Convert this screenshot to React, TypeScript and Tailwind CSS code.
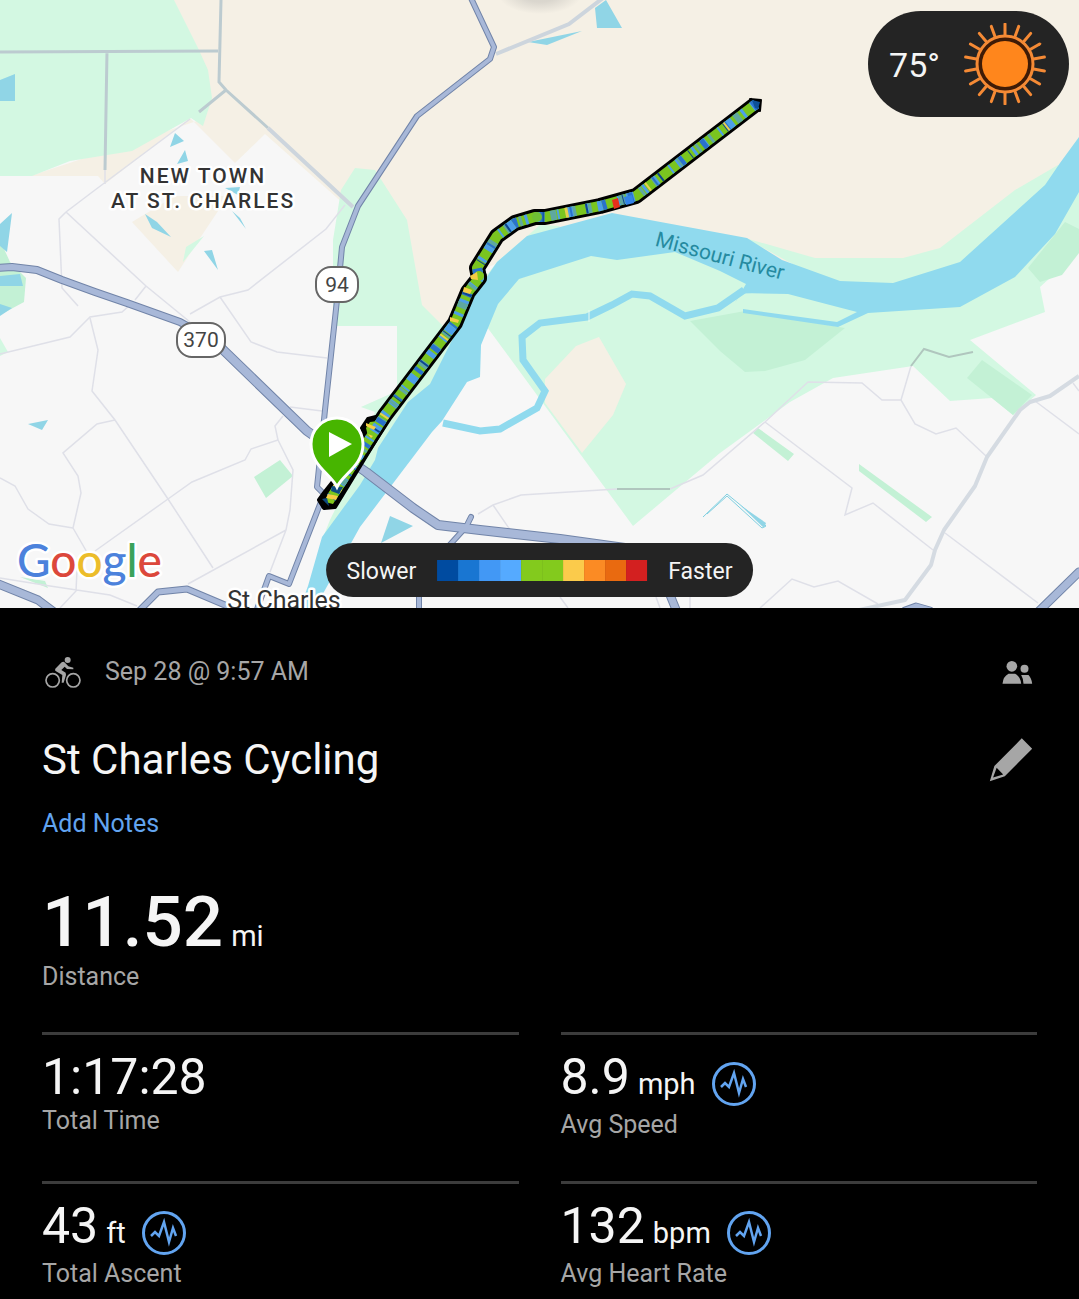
import React from "react";

interface Stat {
  label: string;
  value: string;
  unit?: string;
  hasChart?: boolean;
}

const stats: Stat[] = [
  { label: "Total Time", value: "1:17:28" },
  { label: "Avg Speed", value: "8.9", unit: "mph", hasChart: true },
  { label: "Total Ascent", value: "43", unit: "ft", hasChart: true },
  { label: "Avg Heart Rate", value: "132", unit: "bpm", hasChart: true },
];

const speedColors = [
  "bg-[#004ba0]",
  "bg-[#1976d2]",
  "bg-[#4298f5]",
  "bg-[#55aaff]",
  "bg-[#83ca1d]",
  "bg-[#83ca1d]",
  "bg-[#fbcb4b]",
  "bg-[#fb8b24]",
  "bg-[#e96a10]",
  "bg-[#d32020]",
];

const highways = [
  { d: "M470 -4 L494 47 L490 59 L417 116 L358 206 L342 247 L337 300 L325 410 L317 487 L324 494 L289 584 L269 576 L256 612", w: 4 },
  { d: "M-4 268 L12 267 L37 270 L62 280 L95 292 L127 303 L180 322 L214 341", w: 6 },
  { d: "M214 341 L307 431 L366 472 L413 508 L438 525 L480 530 L560 539 L740 564", w: 8 },
  { d: "M-4 583 L38 600 L54 612", w: 7 },
  { d: "M140 610 L158 592 L187 589 L232 608", w: 5 },
  { d: "M471 517 L466 527 L446 549", w: 4 },
  { d: "M419 590 L419 612", w: 4 },
  { d: "M668 590 L677 612", w: 7 },
  { d: "M1038 612 L1079 572", w: 7 },
  { d: "M905 610 L916 606 L930 610", w: 5 },
];

const localRoads = [
  "M105 170 L105 184 M190 119 L95 190 L66 212 L59 219 L62 288 L78 306 M90 318 L98 350 L92 391 L115 420 L168 499 L213 568",
  "M66 212 L146 286 L190 322 M146 286 L135 300",
  "M345 205 L326 229 L248 290 L220 297 L190 314 M220 297 L251 342 L277 352 L327 358",
  "M0 354 L70 337 L90 317 L122 312 L130 305",
  "M115 420 L97 424 L63 453 L78 476 L81 493 L73 528 L88 554",
  "M0 478 L15 486 L28 509 L49 524 L73 528",
  "M95 551 L168 499 L192 482 L245 460 L251 449 L278 440 L275 426 L283 416",
  "M278 440 L293 470 L290 510 L286 530 L270 572 M286 530 L188 584",
  "M290 407 L322 411",
  "M0 578 L50 586 L110 595 L137 606 M77 570 L76 591 L60 608",
  "M478 514 L493 505 L521 495 L617 489 M670 489 L703 475 L765 422 L808 382 L862 383 L882 400 L901 400 L915 424 L936 434 L956 428 L986 456",
  "M901 400 L911 366 M765 422 L852 488 L845 515 L873 503 L933 550",
  "M493 505 L515 537 M945 533 L1038 603 M1035 401 L1079 434 M1073 383 L1079 391",
  "M760 608 L792 579 L814 587 L838 581 L878 604",
  "M560 597 L568 608 M656 597 L660 608 M690 597 L690 608",
];

const route =
  "M756 104 L636 196 L600 206 L545 217 L535 217 L515 223 L497 236 L477 268 L479 278 L468 292 L455 323 L385 415 L331 498";

const rayAngles = Array.from({ length: 18 }, (_, i) => i * 20);

const RideMap: React.FC = () => (
  <svg
    viewBox="0 0 1079 608"
    className="block w-full h-auto font-[Roboto,sans-serif]"
    role="img"
    aria-label="Ride map"
  >
    <defs>
      <radialGradient id="knob">
        <stop offset="0.4" stopColor="#888" stopOpacity="0.25" />
        <stop offset="1" stopColor="#888" stopOpacity="0" />
      </radialGradient>
    </defs>
    <rect width="1079" height="608" fill="#f7f7f7" />

    {/* LAND */}
    <path d="M170 0 H1079 V170 L940 262 H760 L612 214 L470 275 L445 325 L420 325 L370 200 L345 205 L265 134 L235 163 L190 118 L105 184 L98 176 H30 L200 120Z" fill="#f5f0e5" />
    <path d="M0 0 H174 L198 48 L208 70 L212 98 L203 126 L191 118 L132 151 L70 161 L32 176 H0Z" fill="#d3f8e2" />
    <path d="M132 222 L175 196 L228 196 L200 238 L178 272Z" fill="#f5f0e5" />
    <path d="M204 236 L186 247 L183 262Z" fill="#d3f8e2" />
    <path d="M355 168 L375 170 L407 220 L422 305 L445 328 L497 262 L540 225 L560 226 L440 390 L320 545 L330 520 L352 475 L375 412 L361 407 L397 391 V326 H333 V240 L341 190Z" fill="#d3f8e2" />
    <path d="M0 240 L10 262 L26 278 L24 302 L0 315Z" fill="#c3f1d5" />
    <path d="M0 338 L8 352 L0 356Z" fill="#d3f8e2" />
    <path d="M745 238 L815 258 H903 L940 248 L1015 190 L1058 165 V200 L960 290 H840Z" fill="#d3f8e2" />
    <path d="M487 327 L498 304 L519 279 L591 250 L680 245 L788 290 L870 300 L1015 270 L1079 190 V252 L1040 287 L1045 312 L970 340 L1036 395 L1013 415 L992 398 L950 401 L913 366 L833 378 L790 402 L720 453 L633 526Z" fill="#d3f8e2" />
    <path d="M1065 222 L1079 229 V253 L1062 275 L1040 282 L1028 268Z" fill="#c3f1d5" />
    <path d="M690 321 L745 311 L845 328 L805 360 L765 371 L745 372 L720 351Z" fill="#c3f1d5" />
    <path d="M982 360 L1032 395 L1013 415 L967 378Z" fill="#c3f1d5" />
    <path d="M599 337 L576 346 L545 379 L545 403 L582 453 L613 415 L626 384Z" fill="#f5f0e5" />
    <path d="M280 460 L293 476 L266 498 L254 477Z M758 428 L794 454 L788 461 L753 433Z M859 464 L932 517 L926 522 L859 471Z M20 577 L45 581 L48 588Z" fill="#c3f1d5" />

    {/* WATER */}
    <path d="M300 608 L308 586 L322 537 L360 485 L375 460 L378 448 L408 402 L430 384 L447 350 L478 290 L497 262 L527 236 L612 213 L720 233 L747 238 L782 260 L840 281 L893 283 L960 262 L1045 185 L1060 163 L1079 137 V192 L1055 234 L1015 277 L960 307 L868 313 L838 327 L743 313 V309 L837 322 L857 312 L830 305 L788 294 L740 293 L735 303 L746 284 L720 271 L675 252 L617 260 L591 256 L519 279 L498 304 L481 345 L480 377 L467 382 L442 421 L432 432 L360 527 L315 608Z" fill="#90daee" />
    <path d="M744 290 L718 308 L685 316 L650 296 L632 294 L612 305 L587 317 L540 323 L522 337 L523 360 L545 391 L537 408 L500 429 L480 431 L443 423" fill="none" stroke="#90daee" strokeWidth="7" />
    <path d="M589 310 V322" stroke="#e9fbf2" strokeWidth="1" />
    <path d="M0 80 L15 74 V101 H0Z M595 8 L606 0 L622 28 L597 28Z M528 42 L582 31 L547 45Z M0 224 L12 213 L7 252 L0 246Z M0 276 L20 274 L23 286 H0Z M0 304 L12 308 L0 316Z M175 133 L184 141 L170 147Z M185 150 L188 161 L177 164Z M145 214 L157 222 L171 237 L152 228Z M232 211 L240 218 L246 229Z M204 251 L212 250 L218 270Z M225 188 L240 187 L238 195Z M28 424 L48 420 L42 430Z M390 516 L413 526 L381 543Z" fill="#90d5e6" />
    <path d="M703 517 L727 494 L766 526 L762 528 L727 496 L707 514" fill="none" stroke="#7fcfe0" strokeWidth="1" />
    <path d="M740 505 L766 523 L764 528Z" fill="#90d5e6" />

    {/* ROADS */}
    {localRoads.map((d) => (
      <path key={d} d={d} fill="none" stroke="#dfe0e8" strokeWidth="1.5" />
    ))}
    <path d="M0 52 L218 51 M221 0 L219 82 L226 90 L268 128 M107 51 L105 170 M226 90 L199 112" fill="none" stroke="#bccbd0" strokeWidth="3" />
    <path d="M268 128 L353 207 M496 54 L569 24 L603 -2" fill="none" stroke="#cdd5dd" strokeWidth="4" />
    <path d="M617 489 H670 M911 366 L924 349 L949 357 L973 352" fill="none" stroke="#b0c6be" strokeWidth="2" />
    <path d="M850 612 L905 600 L931 565 L935 550 L944 530 L975 486 L987 457 L1020 410 L1030 402 L1050 396 L1079 376" fill="none" stroke="#d5dbe2" strokeWidth="4" strokeLinejoin="round" />
    <g fill="none" strokeLinejoin="round" strokeLinecap="round">
      {highways.map((road) => (
        <path key={road.d} d={road.d} stroke="#7184a8" strokeWidth={road.w + 2} />
      ))}
      {highways.map((road) => (
        <path key={road.d} d={road.d} stroke="#a8b8d8" strokeWidth={road.w} />
      ))}
    </g>

    {/* SHIELDS */}
    <g fill="#fff" stroke="#666" strokeWidth="2">
      <rect x="316" y="267" width="42" height="35" rx="15" />
      <rect x="177" y="323" width="48" height="34" rx="15" />
    </g>
    <g fontSize="21" fill="#444" textAnchor="middle">
      <text x="337" y="292">94</text>
      <text x="201" y="347">370</text>
    </g>

    {/* PLACE NAMES */}
    <g textAnchor="middle" fill="#333" stroke="#fff" strokeWidth="5" strokeLinejoin="round" paintOrder="stroke">
      <g fontSize="21" fontWeight="500" letterSpacing="2">
        <text x="203" y="183">NEW TOWN</text>
        <text x="203" y="208">AT ST. CHARLES</text>
      </g>
      <text x="284" y="609" fontSize="25">St Charles</text>
    </g>
    <text x="720" y="263" fontSize="21" fill="#258aa0" textAnchor="middle" transform="rotate(15 720 256)">
      Missouri River
    </text>

    {/* ROUTE */}
    <g fill="none" strokeLinejoin="round">
      <path d="M376 417 L368 419 L362 428 L366 440 L324 493 L319 500 L324 508 L335 507 L388 420Z" fill="#000" stroke="#000" strokeWidth="4" />
      <path d={route} stroke="#000" strokeWidth="16" />
      <path d="M750 99 L761 100 L760 111 L752 109Z" fill="#000" stroke="#000" strokeWidth="2" />
      <circle cx="479" cy="277" r="8" fill="#000" />
      <circle cx="537" cy="217" r="8" fill="#000" />
      <path d="M378 421 L370 422 L366 428 L369 440 L328 494 L325 502 L333 504 L384 422Z" fill="#83ca1d" />
      <path d={route} stroke="#7ac520" strokeWidth="10" />
      <path d={route} stroke="#4d9fe8" strokeWidth="10" strokeDasharray="5 9 3 12 8 7 2 16" />
      <path d={route} stroke="#5fa8a0" strokeWidth="10" strokeDasharray="3 17 6 29 3 13" />
      <path d={route} stroke="#2a72cc" strokeWidth="10" strokeDasharray="4 31 2 26 5 23" />
      <path d={route} stroke="#0d4590" strokeWidth="10" strokeDasharray="1 36 2 43" />
      <path d={route} stroke="#e6cf4e" strokeWidth="10" strokeDasharray="2 97 2 84 3 190" strokeDashoffset="-36" />
      <circle cx="537" cy="217" r="5" fill="#6fbf35" />
      <circle cx="479" cy="276" r="5" fill="#83ca1d" />
    </g>
    <path d="M612 200 L618 198 L620 207 L614 209Z" fill="#e62f1c" />
    <path d="M624 197 L632 195 L634 203 L626 205Z" fill="#3383e8" />
    <path d="M752 100 L760 102 L758 109 L755 108Z" fill="#0d5098" />
    <path d="M470 276 L477 272 L478 280 L471 279Z M464 287 L472 290 L470 294 L463 292Z M450 317 L459 320 L458 323 L450 321Z M366 423 L376 427 L374 430 L366 426Z M368 434 L373 436 L371 438Z M328 494 L338 496 L336 500 L326 498Z" fill="#f5cc45" />
    <path d="M332 486 L343 487 L339 494 L331 491Z M322 499 L327 498 L329 506Z" fill="#0d4a80" />

    {/* START PIN */}
    <path d="M337 487 C331 474 311 466 311 444 A26 26 0 0 1 363 444 C363 466 343 474 337 487Z" fill="#47b500" stroke="#fff" strokeWidth="3" />
    <path d="M329 432 L352 444 L329 457Z" fill="#fff" />

    {/* GOOGLE */}
    <text x="17" y="577" fontSize="46" fontWeight="500" stroke="#fff" strokeWidth="5" strokeLinejoin="round" paintOrder="stroke" className="font-[Lato,sans-serif]">
      <tspan fill="#4c82dc">G</tspan>
      <tspan fill="#dc483c">o</tspan>
      <tspan fill="#ecbd2a">o</tspan>
      <tspan fill="#4c82dc">g</tspan>
      <tspan fill="#3ba25b">l</tspan>
      <tspan fill="#dc483c">e</tspan>
    </text>
    <ellipse cx="540" cy="-6" rx="42" ry="20" fill="url(#knob)" />
  </svg>
);

const SunIcon: React.FC = () => (
  <svg viewBox="0 0 82 82" className="size-[82px]" aria-hidden="true">
    <circle cx="41" cy="41" r="28" fill="#3f1b06" stroke="#f58a35" strokeWidth="3" />
    <circle cx="41" cy="41" r="23" fill="#ff861c" />
    {rayAngles.map((angle) => (
      <path
        key={angle}
        d="M41 12 V1"
        stroke="#f58a35"
        strokeWidth="3"
        strokeLinecap="round"
        transform={`rotate(${angle} 41 41)`}
      />
    ))}
  </svg>
);

const CyclistIcon: React.FC = () => (
  <svg viewBox="75 72 108 96" className="w-9 h-8" fill="#a6a6a6" aria-hidden="true">
    <g fill="none" stroke="#a6a6a6" strokeWidth="5">
      <circle cx="98" cy="145" r="20" />
      <circle cx="160" cy="145" r="20" />
    </g>
    <circle cx="143" cy="84" r="9" />
    <path d="M106 110 L125 91 Q130 87 135 92 L145 103 L160 107 V112 L141 111 L134 104 L124 114 L137 122 L138 129 L131 152 L125 152 L127 129 L108 118 Q103 115 106 110Z" />
  </svg>
);

const PeopleIcon: React.FC = () => (
  <svg viewBox="126 58 92 72" className="w-[31px] h-6" fill="#a6a6a6" aria-hidden="true">
    <circle cx="155" cy="77" r="16" />
    <circle cx="193" cy="84" r="12" />
    <path d="M127 129 Q129 107 145 99 H165 Q181 107 183 129Z M183 103 H205 Q214 112 216 129 H190 Q190 115 183 103Z" />
  </svg>
);

const PencilIcon: React.FC = () => (
  <svg viewBox="89 294 132 135" className="size-11" fill="#a6a6a6" aria-hidden="true">
    <path
      fillRule="evenodd"
      d="M188 295 L220 327 L136 411 L90 427 L104 380Z M111 385 L100 415 L131 406Z"
    />
  </svg>
);

const ChartIcon: React.FC = () => (
  <svg viewBox="0 0 44 44" className="size-11" fill="none" stroke="#62a4f0" aria-hidden="true">
    <circle cx="22" cy="22" r="20.5" strokeWidth="3" />
    <path
      d="M9 25 L13 21 L17 25 L22 11 L27 31 L31 17 L34 25"
      strokeWidth="2.5"
      strokeLinejoin="miter"
    />
  </svg>
);

const StatCard: React.FC<{ stat: Stat }> = ({ stat }) => (
  <div className="border-t-3 border-[#3c3c3c] pt-[17px] pb-[41px]">
    <div className="flex items-start">
      <p className="text-[50px] leading-[50px]">
        {stat.value}
        {stat.unit && <span className="ml-2 text-[29px] leading-none">{stat.unit}</span>}
      </p>
      {stat.hasChart && (
        <button aria-label={`${stat.label} chart`} className="mt-2.5 ml-4">
          <ChartIcon />
        </button>
      )}
    </div>
    <p className="mt-1 text-[25px] leading-[30px] text-[#a6a6a6]">{stat.label}</p>
  </div>
);

const App: React.FC = () => {
  return (
    <div className="min-h-screen bg-black text-[#f5f5f5] font-[Roboto,sans-serif]">
      {/* MAP */}
      <section className="relative overflow-hidden">
        <RideMap />
        <div className="absolute top-[11px] right-2.5 flex items-center gap-6 rounded-full bg-[#242424] py-3 pl-[21px] pr-[23px]">
          <span className="text-[34px] leading-10 pt-0.5">75°</span>
          <SunIcon />
        </div>
        <div className="absolute bottom-[11px] left-1/2 -translate-x-1/2 flex items-center gap-[21px] rounded-full bg-[#242424] px-[21px] py-3 text-[23px] leading-[26px]">
          <span className="pt-1">Slower</span>
          <div className="flex">
            {speedColors.map((color, idx) => (
              <div key={idx} className={`w-[21px] h-[21px] ${color}`} />
            ))}
          </div>
          <span className="pt-1">Faster</span>
        </div>
      </section>

      {/* DETAILS */}
      <main className="px-[42px] pt-[46px]">
        <div className="flex items-center justify-between h-9">
          <div className="flex items-center gap-6 pl-[3px] text-[25px] leading-[30px] text-[#a6a6a6]">
            <CyclistIcon />
            <span>Sep 28 @ 9:57 AM</span>
          </div>
          <button aria-label="Privacy" className="mr-1">
            <PeopleIcon />
          </button>
        </div>

        <div className="mt-[45px] flex items-center justify-between">
          <h1 className="text-[42px] leading-[50px]">St Charles Cycling</h1>
          <button aria-label="Edit name" className="mr-1">
            <PencilIcon />
          </button>
        </div>
        <button className="mt-6 block text-[25px] leading-[30px] text-[#62a4f0]">
          Add Notes
        </button>

        <p className="mt-[47px] text-[71px] leading-[72px] font-medium">
          11.52<span className="ml-2 text-[29px] leading-none font-normal">mi</span>
        </p>
        <p className="mt-1 text-[25px] leading-[30px] text-[#a6a6a6]">Distance</p>

        {/* STATS */}
        <div className="mt-10 grid grid-cols-2 gap-x-[42px]">
          {stats.map((stat) => (
            <StatCard key={stat.label} stat={stat} />
          ))}
        </div>
      </main>
    </div>
  );
};

export default App;
